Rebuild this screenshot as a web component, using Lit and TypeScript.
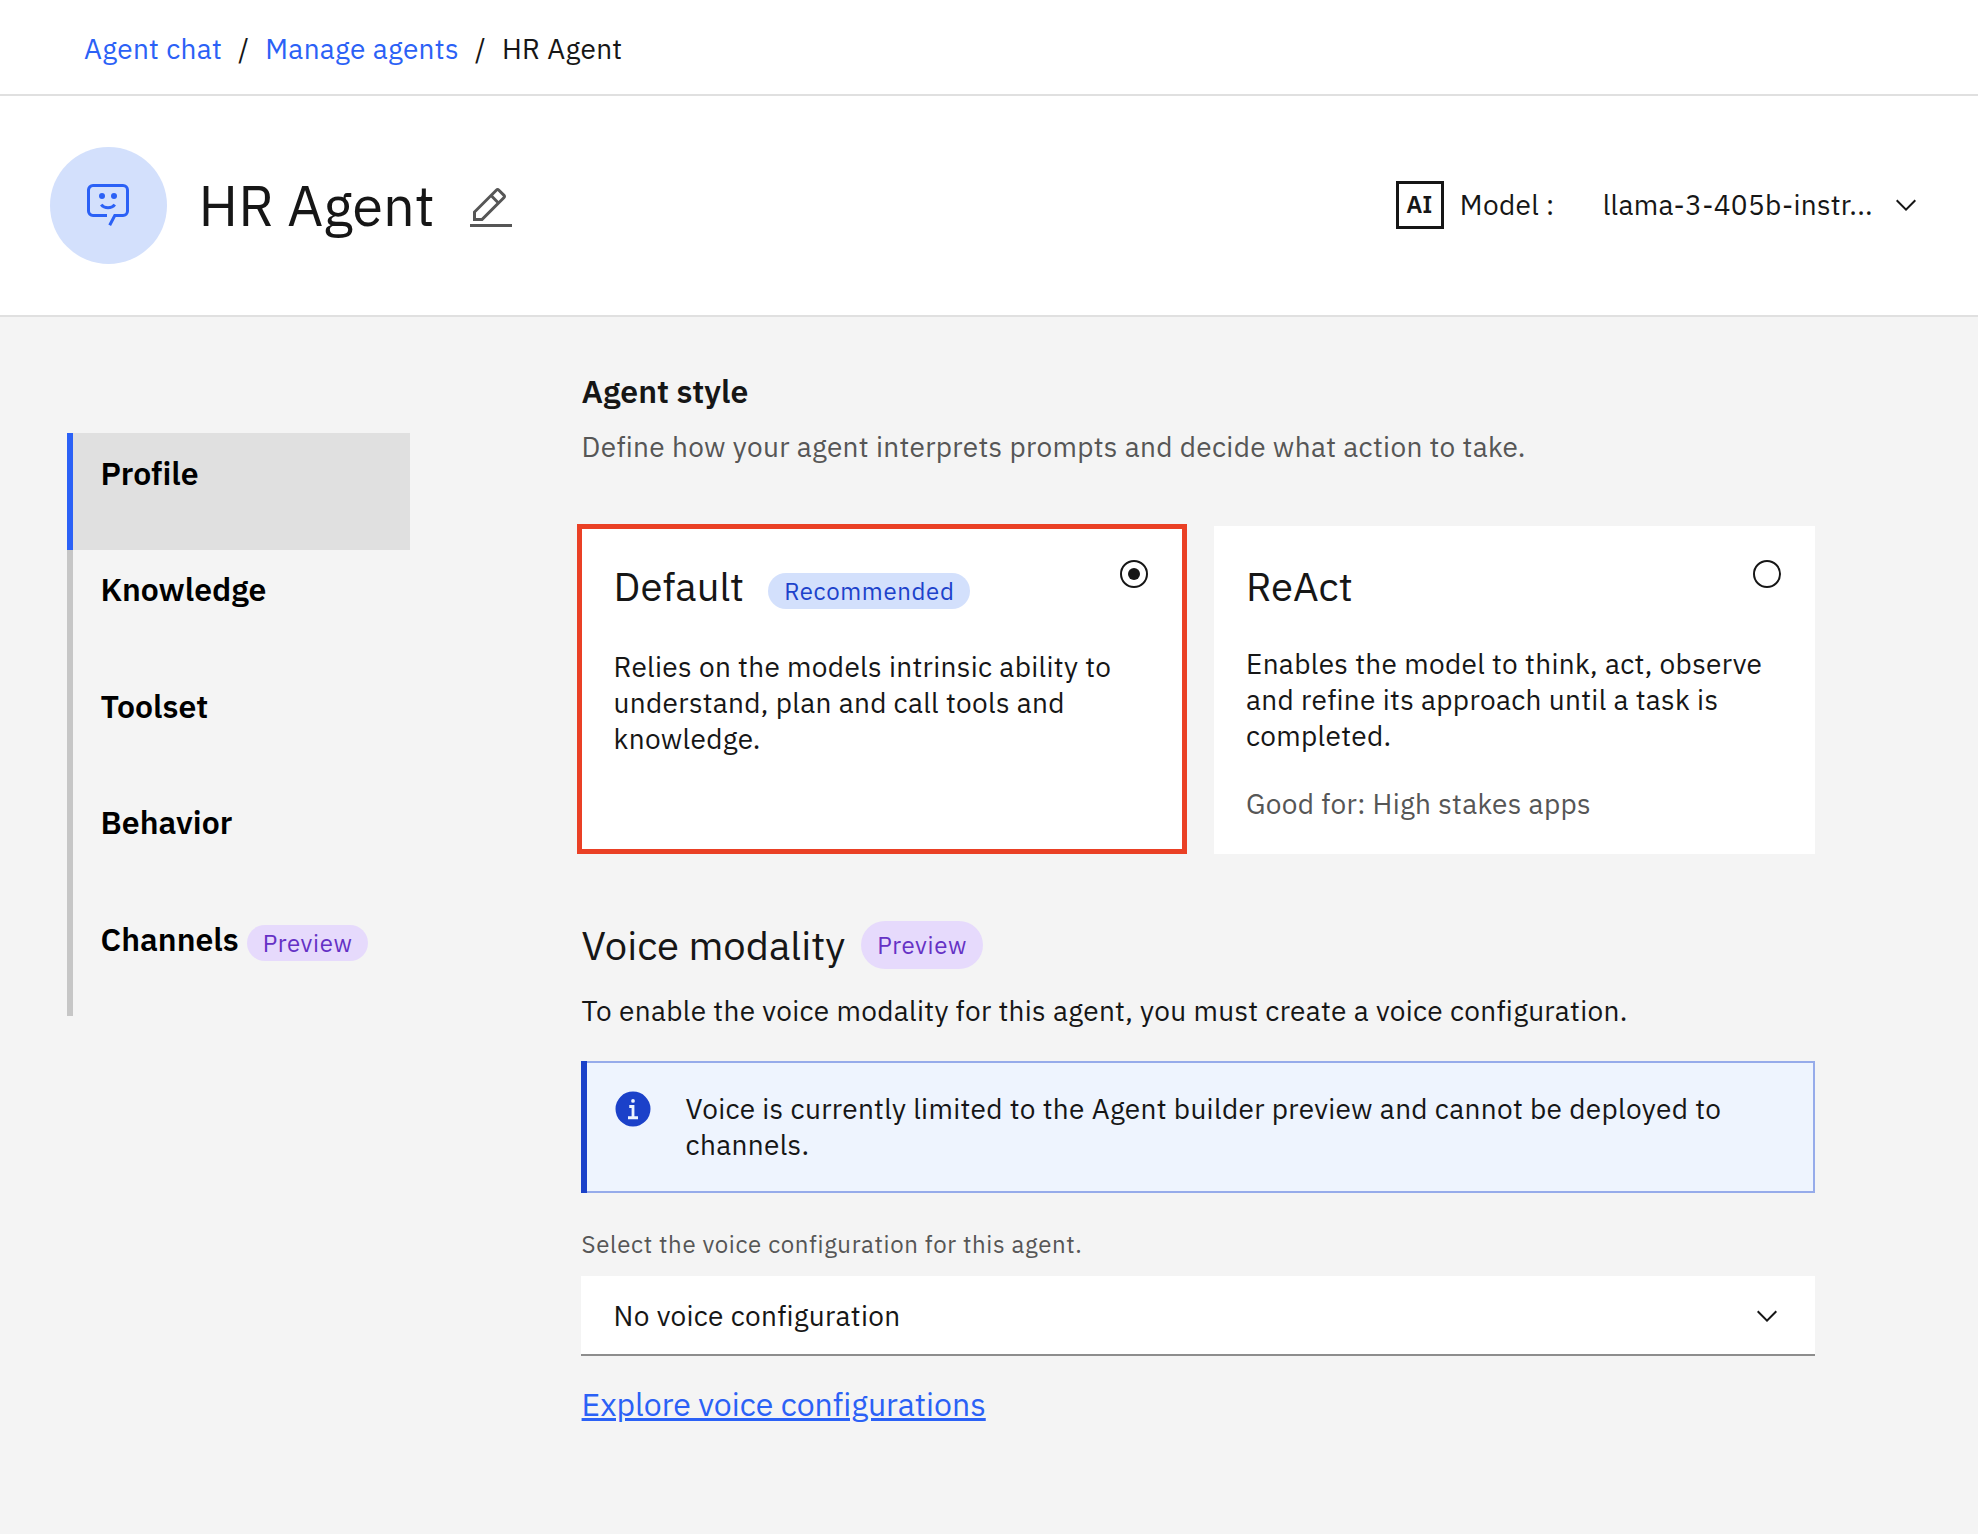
import { LitElement, html, css, nothing } from "lit";
import { customElement, property, state } from "lit/decorators.js";
import { classMap } from "lit/directives/class-map.js";

const chevron = html`
  <svg width="32" height="32" viewBox="0 0 16 16" fill="#161616" aria-hidden="true">
    <path d="M8 11 3 6l.7-.7L8 9.6l4.3-4.3.7.7z" />
  </svg>
`;

@customElement("status-tag")
class StatusTag extends LitElement {
  @property() color = "blue";
  @property() size = "sm";

  static styles = css`
    :host {
      display: block;
      flex: none;
    }
    .tag {
      display: flex;
      align-items: center;
      height: 36px;
      padding: 0 16px;
      border-radius: 24px;
      font-size: 24px;
      line-height: 32px;
      font-weight: 400;
      letter-spacing: 0.64px;
      white-space: nowrap;
    }
    .lg {
      height: 48px;
    }
    .blue {
      background: #d3e0fc;
      color: #1c42cb;
    }
    .purple {
      background: #e6dafc;
      color: #6531c5;
    }
  `;

  render() {
    return html`<span
      class=${classMap({ tag: true, lg: this.size === "lg", blue: this.color === "blue", purple: this.color === "purple" })}
      ><slot></slot
    ></span>`;
  }
}

@customElement("style-card")
class StyleCard extends LitElement {
  @property() heading = "";
  @property() badge = "";
  @property() note = "";
  @property({ type: Boolean }) selected = false;

  static styles = css`
    :host {
      display: block;
    }
    .card {
      position: relative;
      box-sizing: border-box;
      height: 328px;
      padding: 34px 34px 0 32px;
      background: #fff;
      color: #161616;
    }
    .marked {
      padding-left: 32.6px;
    }
    .marked::after {
      content: "";
      position: absolute;
      inset: -2px -5px 0 -4px;
      border: 5px solid #ea4025;
    }
    .head {
      display: flex;
      align-items: flex-start;
    }
    .title {
      margin: 0;
      font-size: 40px;
      line-height: 52px;
      font-weight: 400;
    }
    .badge {
      margin: 13px 0 0 24px;
    }
    .radio {
      box-sizing: border-box;
      display: grid;
      place-items: center;
      width: 28px;
      height: 28px;
      margin-left: auto;
      border: 2px solid #161616;
      border-radius: 50%;
    }
    .dot {
      width: 12px;
      height: 12px;
      border-radius: 50%;
      background: #161616;
    }
    .text {
      margin: 34px 0 0;
      font-size: 28px;
      line-height: 36px;
      letter-spacing: 0.32px;
    }
    .marked .text {
      margin-top: 37px;
    }
    .note {
      margin: 32px 0 0;
      font-size: 28px;
      line-height: 36px;
      letter-spacing: 0.32px;
      color: #565656;
    }
  `;

  render() {
    return html`
      <section class=${classMap({ card: true, marked: this.selected })}>
        <div class="head">
          <h3 class="title">${this.heading}</h3>
          ${this.badge ? html`<status-tag class="badge">${this.badge}</status-tag>` : nothing}
          <span class="radio">${this.selected ? html`<span class="dot"></span>` : nothing}</span>
        </div>
        <p class="text"><slot></slot></p>
        ${this.note ? html`<p class="note">${this.note}</p>` : nothing}
      </section>
    `;
  }
}

@customElement("app-root")
class AppRoot extends LitElement {
  @state() private active = "Profile";

  private sections = [
    { name: "Profile", tag: "" },
    { name: "Knowledge", tag: "" },
    { name: "Toolset", tag: "" },
    { name: "Behavior", tag: "" },
    { name: "Channels", tag: "Preview" },
  ];

  static styles = css`
    :host {
      display: block;
      font-family: "IBM Plex Sans", "Open Sans", "Noto Sans", sans-serif;
      font-size: 28px;
      line-height: 36px;
      letter-spacing: 0.32px;
      font-variant-ligatures: none;
      color: #161616;
    }
    .page {
      display: flex;
      flex-direction: column;
      min-height: 1534px;
      background: #f4f4f4;
    }
    .crumbs {
      box-sizing: border-box;
      display: flex;
      gap: 16px;
      height: 96px;
      padding: 31px 84px 0;
      border-bottom: 2px solid #e0e0e0;
      background: #fff;
    }
    .link {
      color: #2b61f6;
      text-decoration: none;
    }
    .header {
      box-sizing: border-box;
      display: flex;
      align-items: center;
      height: 221px;
      padding: 0 56px 0 50px;
      border-bottom: 2px solid #e0e0e0;
      background: #fff;
    }
    .avatar {
      box-sizing: border-box;
      display: grid;
      place-items: center;
      width: 117px;
      height: 117px;
      padding: 0 1px 1px 0;
      border-radius: 50%;
      background: #d3e0fc;
    }
    .name {
      margin: 0 0 1px 31.6px;
      font-size: 56px;
      line-height: 72px;
      font-weight: 400;
      letter-spacing: 0;
    }
    .edit {
      margin: 7px 0 0 32.4px;
    }
    .controls {
      display: flex;
      align-items: center;
      margin: 0 0 1px auto;
    }
    .ai {
      box-sizing: border-box;
      display: grid;
      place-items: center;
      width: 48px;
      height: 48px;
      padding: 0 1px 2px 0;
      border: 3px solid #161616;
      font-size: 24px;
      line-height: 32px;
      font-weight: 600;
      letter-spacing: 0;
    }
    .label {
      margin-left: 16px;
    }
    .model {
      display: flex;
      align-items: center;
      justify-content: space-between;
      width: 319.3px;
      margin-left: 48.2px;
    }
    svg {
      display: block;
      flex: none;
    }
    .body {
      display: flex;
      align-items: flex-start;
      flex: 1;
    }
    .nav {
      width: 343px;
      margin: 116px 171px 0 67px;
      letter-spacing: 0;
    }
    .item {
      box-sizing: border-box;
      display: flex;
      align-items: flex-start;
      height: 116.5px;
      padding: 20px 0 0 27.6px;
      border-left: 6px solid #c6c6c6;
      font-size: 32px;
      line-height: 40px;
      font-weight: 600;
      color: #000;
    }
    .item:nth-child(even) {
      padding-top: 19.4px;
    }
    .active {
      border-left-color: #2b61f6;
      background: #e0e0e0;
    }
    .navtag {
      margin: 6px 0 0 8px;
    }
    .content {
      width: 1234px;
      padding-top: 54px;
    }
    .h-strong,
    .sub,
    .voice,
    .para,
    .hint {
      padding-left: 0.6px;
    }
    .h-strong {
      margin: 0;
      font-size: 32px;
      line-height: 40px;
      font-weight: 600;
      letter-spacing: 0;
    }
    .sub {
      margin: 18px 0 0;
      color: #565656;
    }
    .cards {
      display: grid;
      grid-template-columns: 1fr 1fr;
      gap: 32px;
      margin-top: 61px;
      letter-spacing: 0;
    }
    .voice {
      display: flex;
      align-items: center;
      gap: 16px;
      margin-top: 65px;
    }
    .h-voice {
      margin: 0;
      font-size: 40px;
      line-height: 52px;
      font-weight: 400;
      letter-spacing: 0;
    }
    .para {
      margin: 22px 0 0;
    }
    .notice {
      box-sizing: border-box;
      position: relative;
      display: flex;
      align-items: flex-start;
      height: 132px;
      margin-top: 32px;
      padding: 26px 32px 0;
      border: 2px solid #96abea;
      border-left: 0;
      background: #eef4fe;
    }
    .notice::before {
      content: "";
      position: absolute;
      left: 0;
      top: -2px;
      bottom: -2px;
      width: 6px;
      background: #1b41c9;
    }
    .msg {
      margin: 2px 0 0 32.6px;
    }
    .hint {
      margin: 35px 0 0;
      font-size: 24px;
      line-height: 32px;
      letter-spacing: 0.64px;
      color: #565656;
    }
    .select {
      box-sizing: border-box;
      display: flex;
      align-items: center;
      justify-content: space-between;
      height: 80px;
      margin-top: 16px;
      padding: 2px 32px 0 32.6px;
      border-bottom: 2px solid #8d8d8d;
      background: #fff;
    }
    .explore {
      display: block;
      width: max-content;
      margin: 28px 0 0 0.6px;
      font-size: 32px;
      line-height: 40px;
      letter-spacing: 0;
      color: #2b61f6;
      text-decoration: underline;
      text-decoration-thickness: 3px;
      text-underline-offset: 2px;
    }
  `;

  render() {
    return html`
      <div class="page">
        <nav class="crumbs">
          <a class="link">Agent chat</a><span>/</span><a class="link">Manage agents</a><span>/</span><span>HR Agent</span>
        </nav>

        <header class="header">
          <div class="avatar">
            <svg width="48" height="48" viewBox="0 0 48 48" fill="none" stroke="#2b61f6" stroke-width="3" aria-hidden="true">
              <path d="M23 34.5H9A4.5 4.5 0 0 1 4.5 30V9A4.5 4.5 0 0 1 9 4.5h30A4.5 4.5 0 0 1 43.5 9v21a4.5 4.5 0 0 1-4.5 4.5h-8.2L25.7 44.2" />
              <path d="M17.2 23.6c3.4 4.3 10.2 4.3 13.6 0" />
              <circle cx="18" cy="15" r="3" fill="#2b61f6" stroke="none" />
              <circle cx="30" cy="15" r="3" fill="#2b61f6" stroke="none" />
            </svg>
          </div>
          <h1 class="name">HR Agent</h1>
          <svg class="edit" width="48" height="48" viewBox="0 0 32 32" fill="#565656" aria-hidden="true">
            <path d="M2 26h28v2H2zM25.4 9c.8-.8.8-2 0-2.8l-3.6-3.6c-.8-.8-2-.8-2.8 0l-15 15V24h6.4zm-5-5L24 7.6l-3 3L17.4 7zM6 22v-3.6l10-10 3.6 3.6-10 10z" />
          </svg>
          <div class="controls">
            <span class="ai">AI</span>
            <span class="label">Model :</span>
            <div class="model"><span>llama-3-405b-instr...</span>${chevron}</div>
          </div>
        </header>

        <div class="body">
          <nav class="nav">
            ${this.sections.map(
              (s) => html`
                <div class=${classMap({ item: true, active: s.name === this.active })} @click=${() => (this.active = s.name)}>
                  ${s.name}${s.tag ? html`<status-tag class="navtag" color="purple">${s.tag}</status-tag>` : nothing}
                </div>
              `,
            )}
          </nav>

          <main class="content">
            <h2 class="h-strong">Agent style</h2>
            <p class="sub">Define how your agent interprets prompts and decide what action to take.</p>
            <div class="cards">
              <style-card heading="Default" badge="Recommended" selected
                >Relies on the models intrinsic ability to understand, plan and call tools and knowledge.</style-card
              >
              <style-card heading="ReAct" note="Good for: High stakes apps"
                >Enables the model to think, act, observe and refine its approach until a task is completed.</style-card
              >
            </div>

            <div class="voice">
              <h2 class="h-voice">Voice modality</h2>
              <status-tag color="purple" size="lg">Preview</status-tag>
            </div>
            <p class="para">To enable the voice modality for this agent, you must create a voice configuration.</p>

            <div class="notice">
              <svg width="40" height="40" viewBox="0 0 32 32" fill="#1b41c9" aria-hidden="true">
                <path fill-rule="evenodd" d="M16 2a14 14 0 1 0 0 28 14 14 0 0 0 0-28zm0 6a1.5 1.5 0 1 1 0 3 1.5 1.5 0 0 1 0-3zm4 16.12h-8v-2.24h2.88v-6.76H13v-2.24h4.13v9H20z" />
              </svg>
              <p class="msg">Voice is currently limited to the Agent builder preview and cannot be deployed to channels.</p>
            </div>

            <p class="hint">Select the voice configuration for this agent.</p>
            <div class="select"><span>No voice configuration</span>${chevron}</div>
            <a class="explore">Explore voice configurations</a>
          </main>
        </div>
      </div>
    `;
  }
}
